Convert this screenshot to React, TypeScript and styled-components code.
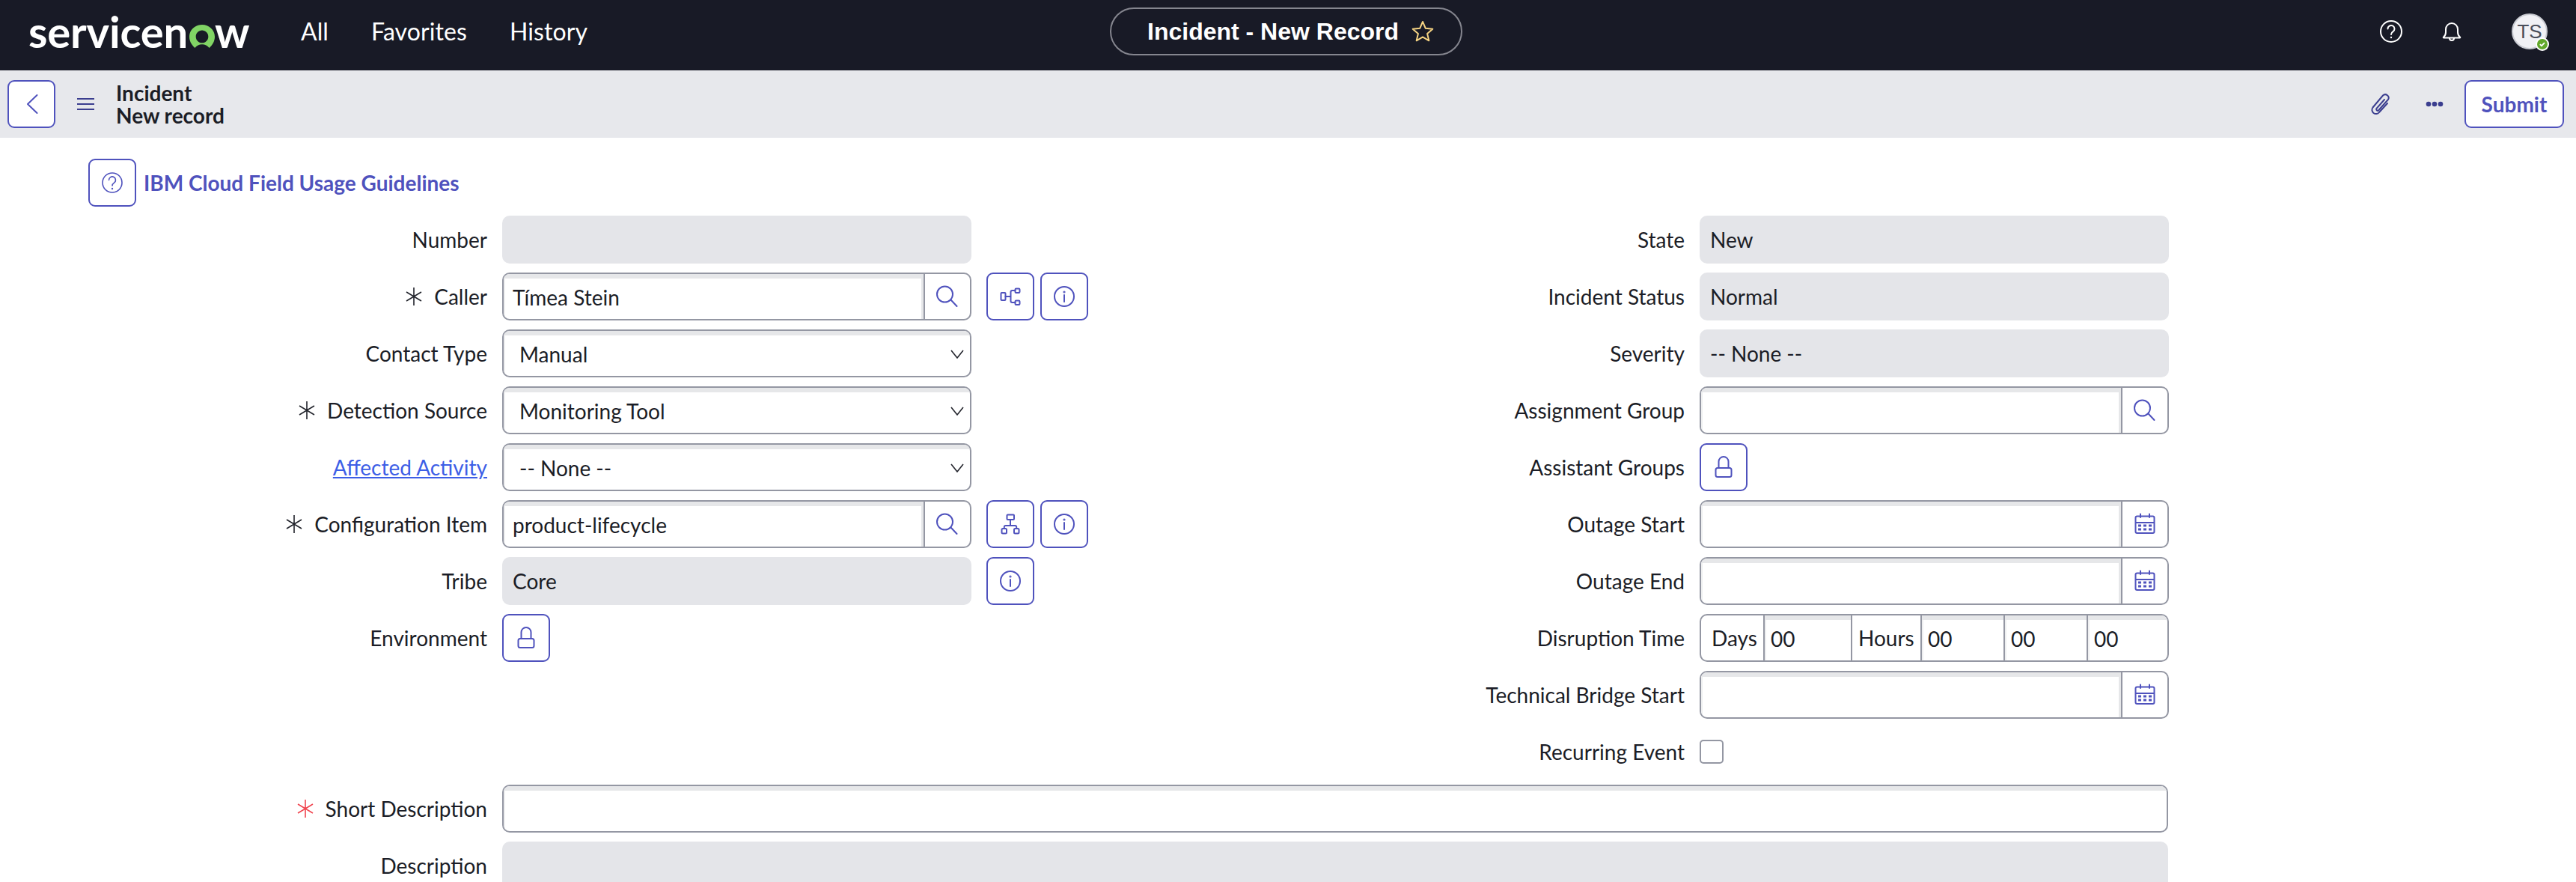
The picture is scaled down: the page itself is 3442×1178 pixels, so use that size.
import React from "react";
import styled, { createGlobalStyle } from "styled-components";

const PRIMARY = "#4f52bd";
const NAVY = "#3b3e8f";
const BORDER = "#9497a3";
const STRIP = "#e6e7e9";
const FONT = `"Lato", "Liberation Sans", Arial, sans-serif`;

const Global = createGlobalStyle`
  html, body { margin: 0; padding: 0; background: #fff; }
  body { font-family: ${FONT}; font-size: 28px; color: #1b1d26; }
  * { box-sizing: border-box; }
`;

const Page = styled.div`
  width: 3442px;
  height: 1178px;
  overflow: hidden;
  background: #fff;
`;

/* ---------- top bar ---------- */
const TopBar = styled.header`
  height: 94px;
  background: #181a26;
  display: grid;
  grid-template-columns: 1483px 471px 1fr;
  align-items: start;
`;
const TopLeft = styled.div`
  display: flex;
  align-items: center;
  height: 84px;
  padding-left: 38px;
`;
const Logo = styled.div`
  display: flex;
  align-items: baseline;
  width: 296px;
  margin-right: 68px;
  font: 700 58px/1 ${FONT};
  color: #fff;
  letter-spacing: -0.2px;
  white-space: nowrap;
`;
const LogoRing = styled.svg`
  width: 34px;
  height: 31px;
  margin: 0 0 -1px 2px;
  flex: none;
`;
const Nav = styled.nav`
  display: flex;
  gap: 57px;
  font: 400 32px/1 ${FONT};
  letter-spacing: 0.1px;
  color: #fff;
`;
const TitlePill = styled.div`
  margin-top: 10px;
  height: 64px;
  border: 2px solid #85868f;
  border-radius: 32px;
  display: flex;
  align-items: center;
  padding-left: 48px;
  gap: 17px;
  font: 700 32px/1 "Liberation Sans", Arial, sans-serif;
  color: #fff;
  white-space: nowrap;
`;
const TopRight = styled.div`
  display: flex;
  align-items: center;
  justify-content: flex-end;
  height: 84px;
  padding-right: 38px;
  gap: 0;
  color: #fff;
`;
const TopIcon = styled.svg<{ $gap: number }>`
  width: 32px;
  height: 32px;
  margin-right: ${(p) => p.$gap}px;
  flex: none;
`;
const Avatar = styled.div`
  position: relative;
  width: 48px;
  height: 48px;
  border-radius: 50%;
  background: #f1f1f5;
  border: 2px solid #c9cbd2;
  color: #4a4e5a;
  font: 400 26px/44px "Liberation Sans", Arial, sans-serif;
  text-align: center;
`;
const AvatarBadge = styled.svg`
  position: absolute;
  right: -4px;
  bottom: -4px;
  width: 18px;
  height: 18px;
`;

/* ---------- sub bar ---------- */
const SubBar = styled.div`
  height: 90px;
  background: #e7e8ec;
  display: flex;
  align-items: center;
  padding: 0 16px 0 10px;
`;
const IconButton = styled.div`
  width: 64px;
  height: 64px;
  flex: none;
  background: #fff;
  border: 2px solid ${PRIMARY};
  border-radius: 9px;
  display: flex;
  align-items: center;
  justify-content: center;
`;
const Burger = styled.div`
  width: 23px;
  margin: 0 29px 0 29px;
  display: flex;
  flex-direction: column;
  gap: 5px;
  flex: none;
`;
const BurgerLine = styled.span`
  display: block;
  height: 2px;
  background: ${NAVY};
`;
const RecordTitle = styled.div`
  font: 700 28px/30px ${FONT};
  color: #1b1d26;
  flex: 1;
`;
const Tool = styled.svg<{ $gap: number }>`
  width: 32px;
  height: 32px;
  margin-right: ${(p) => p.$gap}px;
  flex: none;
`;
const SubmitButton = styled.div`
  width: 133px;
  height: 64px;
  background: #fff;
  border: 2px solid ${PRIMARY};
  border-radius: 9px;
  color: ${PRIMARY};
  font: 700 28px/60px ${FONT};
  text-align: center;
`;

/* ---------- form ---------- */
const Content = styled.main`
  padding-top: 28px;
`;
const GuideRow = styled.div`
  display: flex;
  align-items: center;
  gap: 10px;
  margin: 0 0 12px 118px;
`;
const GuideLink = styled.a`
  color: ${PRIMARY};
  font: 700 28px/1 ${FONT};
`;
const Columns = styled.div`
  display: grid;
  grid-template-columns: 1480px 1fr;
`;
const Stack = styled.div`
  display: flex;
  flex-direction: column;
  gap: 12px;
`;
const FullStack = styled(Stack)`
  margin-top: 12px;
`;
const Row = styled.div`
  display: flex;
  align-items: flex-start;
  gap: 20px;
`;
const Label = styled.div<{ $w: number }>`
  width: ${(p) => p.$w}px;
  height: 64px;
  flex: none;
  display: flex;
  align-items: center;
  justify-content: flex-end;
  gap: 14px;
  font: 400 28px/1 ${FONT};
  color: #1b1d26;
  white-space: nowrap;
`;
const LabelLink = styled.a`
  color: #3d5ee6;
  text-decoration: underline;
`;
const Req = styled.svg<{ $red?: boolean }>`
  width: 26px;
  height: 26px;
  flex: none;
  stroke: ${(p) => (p.$red ? "#f0454f" : "#22242c")};
  stroke-width: 1.6;
  fill: none;
`;
const ReadOnly = styled.div<{ $w?: number; $h?: number }>`
  width: ${(p) => (p.$w ? `${p.$w}px` : "627px")};
  height: ${(p) => p.$h ?? 64}px;
  flex: none;
  background: #e4e5e9;
  border-radius: 10px;
  padding: 0 14px;
  display: flex;
  align-items: center;
  font: 400 28px/1 ${FONT};
`;
const InputFrame = styled.div<{ $w?: number }>`
  width: ${(p) => (p.$w ? `${p.$w}px` : "627px")};
  height: 64px;
  flex: none;
  display: flex;
  border: 2px solid ${BORDER};
  border-radius: 10px;
  background: #fff;
  overflow: hidden;
  font: 400 28px/1 ${FONT};
`;
const InputBody = styled.div<{ $pad?: number; $tail?: boolean }>`
  flex: 1;
  min-width: 0;
  display: flex;
  align-items: center;
  justify-content: space-between;
  padding: 2px 6px 0 ${(p) => p.$pad ?? 12}px;
  box-shadow: inset 0 6px 0 ${STRIP}, inset 2px 0 0 #eeeff0
    ${(p) => (p.$tail ? `, inset -3px 0 0 ${STRIP}` : "")};
`;
const Addon = styled.div`
  width: 62px;
  flex: none;
  border-left: 2px solid ${BORDER};
  display: flex;
  align-items: center;
  justify-content: center;
`;
const Icon = styled.svg`
  width: 32px;
  height: 32px;
  flex: none;
  fill: none;
  stroke: ${PRIMARY};
  stroke-width: 2;
  stroke-linecap: round;
  stroke-linejoin: round;
`;
const Chevron = styled.svg`
  width: 18px;
  height: 12px;
  flex: none;
  margin-right: 2px;
  fill: none;
  stroke: #22242c;
  stroke-width: 1.6;
`;
const Extras = styled.div`
  display: flex;
  gap: 8px;
`;
const DurationFrame = styled(InputFrame)`
  padding: 0;
`;
const DurationUnit = styled.div<{ $w: number; $pad: number }>`
  width: ${(p) => p.$w}px;
  flex: none;
  display: flex;
  align-items: center;
  padding-left: ${(p) => p.$pad}px;
  border-right: 2px solid ${BORDER};
`;
const DurationField = styled.div<{ $w: number; $last?: boolean }>`
  width: ${(p) => p.$w}px;
  flex: ${(p) => (p.$last ? 1 : "none")};
  display: flex;
  align-items: center;
  padding: 2px 0 0 8px;
  box-shadow: inset 0 6px 0 ${STRIP}, inset 2px 0 0 #eeeff0;
  border-right: ${(p) => (p.$last ? 0 : `2px solid ${BORDER}`)};
`;
const CheckSlot = styled.div`
  height: 64px;
  display: flex;
  align-items: center;
`;
const CheckBox = styled.div`
  width: 32px;
  height: 32px;
  border: 2px solid ${BORDER};
  border-radius: 5px;
  background: #fff;
`;

/* ---------- icons ---------- */
const SearchIcon = () => (
  <Icon viewBox="0 0 32 32">
    <circle cx="12.5" cy="13" r="10.5" />
    <path d="M20.5 20.5 28.5 29" />
  </Icon>
);
const InfoIcon = () => (
  <Icon viewBox="0 0 32 32">
    <circle cx="16" cy="16" r="13" />
    <circle cx="16" cy="10" r="0.6" />
    <path d="M16 14v9" />
  </Icon>
);
const LockIcon = () => (
  <Icon viewBox="0 0 32 32">
    <rect x="5.5" y="17" width="21" height="12" rx="2.5" />
    <path d="M9.5 17V8.5a6.5 6.5 0 0 1 13 0V17" />
  </Icon>
);
const CalendarIcon = () => (
  <Icon viewBox="0 0 32 32">
    <rect x="3.5" y="5.5" width="25" height="22.5" rx="2" />
    <path d="M4 14h24M10 2.5V7M22 2.5V7" />
    <g fill={PRIMARY} stroke="none">
      <rect x="7" y="16.5" width="4" height="3" />
      <rect x="14" y="16.5" width="4" height="3" />
      <rect x="21" y="16.5" width="4" height="3" />
      <rect x="7" y="21.5" width="4" height="3" />
      <rect x="14" y="21.5" width="4" height="3" />
      <rect x="21" y="21.5" width="4" height="3" />
    </g>
  </Icon>
);
const FlowIcon = () => (
  <Icon viewBox="0 0 32 32">
    <rect x="3.5" y="11" width="6" height="10" rx="1" />
    <rect x="22.5" y="5.5" width="6" height="5.500" rx="1.2" />
    <rect x="22.5" y="21.500" width="6" height="5.500" rx="1.2" />
    <path d="M9.5 16h7M22.5 8h-4a2 2 0 0 0-2 2v12a2 2 0 0 0 2 2h4" />
  </Icon>
);
const TreeIcon = () => (
  <Icon viewBox="0 0 32 32">
    <rect x="11.5" y="3.5" width="9.5" height="6.5" rx="1" />
    <rect x="4.5" y="22" width="6.5" height="6.5" rx="1.5" />
    <rect x="21" y="22" width="6.5" height="6.5" rx="1.5" />
    <path d="M16 10v8M7.8 22v-2a2 2 0 0 1 2-2h12.4a2 2 0 0 1 2 2v2" />
  </Icon>
);
const QuestionGlyph = ({ color, r = 14, sw = 2 }: { color: string; r?: number; sw?: number }) => (
  <>
    <circle cx="16" cy="16" r={r} fill="none" stroke={color} strokeWidth={sw} />
    <path
      d="M11.5 12.5a4.5 4.5 0 1 1 7 3.7c-1.6 1.1-2.5 2-2.5 3.8"
      fill="none"
      stroke={color}
      strokeWidth={sw}
      strokeLinecap="round"
    />
    <circle cx="16" cy="24" r="1.2" fill={color} stroke="none" />
  </>
);

const Asterisk = ({ red }: { red?: boolean }) => (
  <Req viewBox="0 0 26 26" $red={red}>
    <path d="M13 1v24M3 7l20 12M23 7 3 19" />
  </Req>
);

type LabelProps = { w: number; text: React.ReactNode; req?: "black" | "red" };
const FieldLabel = ({ w, text, req }: LabelProps) => (
  <Label $w={w}>
    {req && <Asterisk red={req === "red"} />}
    <span>{text}</span>
  </Label>
);

const Select = ({ value }: { value: string }) => (
  <InputFrame>
    <InputBody $pad={21}>
      <span>{value}</span>
      <Chevron viewBox="0 0 18 12">
        <path d="M1 1l8 10 8-10" />
      </Chevron>
    </InputBody>
  </InputFrame>
);
const Lookup = ({ value, icon }: { value?: string; icon: React.ReactNode }) => (
  <InputFrame>
    <InputBody $tail>{value}</InputBody>
    <Addon>{icon}</Addon>
  </InputFrame>
);

const L = 651;
const R = 771;

export default function App() {
  return (
    <Page>
      <Global />
      <TopBar>
        <TopLeft>
          <Logo>
            <span>servicen</span>
            <LogoRing viewBox="0 0 34 31">
              <path
                d="M17 0C7.600 0 0 7 0 16c0 6 3.200 11.400 7.400 15 2.400-3 5.600-4.700 9.600-4.700s7.200 1.700 9.600 4.700C30.800 27.400 34 22 34 16 34 7 26.400 0 17 0Zm0 7.600c4.700 0 8.300 3.700 8.300 8.400 0 4.600-3.600 8.300-8.300 8.300S8.700 20.600 8.700 16c0-4.700 3.600-8.400 8.300-8.400Z"
                fill="#81d465"
                fillRule="evenodd"
              />
            </LogoRing>
            <span>w</span>
          </Logo>
          <Nav>
            <span>All</span>
            <span>Favorites</span>
            <span>History</span>
          </Nav>
        </TopLeft>
        <TitlePill>
          <span>Incident - New Record</span>
          <svg width="30" height="30" viewBox="0 0 30 30">
            <path
              d="M15 2l3.800 8.800 9.500.9-7.200 6.300 2.200 9.300L15 22.400l-8.300 4.900 2.200-9.300-7.200-6.300 9.500-.9Z"
              fill="none"
              stroke="#f6d483"
              strokeWidth="2"
              strokeLinejoin="round"
            />
          </svg>
        </TitlePill>
        <TopRight>
          <TopIcon viewBox="0 0 32 32" $gap={49}>
            <QuestionGlyph color="#fff" />
          </TopIcon>
          <TopIcon viewBox="0 0 32 32" $gap={64}>
            <path
              d="M5 23.500c2.200-1.500 3-3.500 3-6.500v-4a8 8 0 0 1 16 0v4c0 3 .8 5 3 6.500.6.500.3 1-.4 1H5.400c-.7 0-1-.5-.4-1Z"
              fill="none"
              stroke="#fff"
              strokeWidth="2"
              strokeLinejoin="round"
            />
            <path d="M13 25a3 3 0 0 0 6 0" fill="none" stroke="#fff" strokeWidth="2" />
          </TopIcon>
          <Avatar>
            TS
            <AvatarBadge viewBox="0 0 18 18">
              <circle cx="9" cy="9" r="9" fill="#fff" />
              <circle cx="9" cy="9" r="7" fill="#62a82b" />
              <path d="M5.800 9.200l2.200 2 4-4" fill="none" stroke="#fff" strokeWidth="1.800" />
            </AvatarBadge>
          </Avatar>
        </TopRight>
      </TopBar>

      <SubBar>
        <IconButton>
          <Icon viewBox="0 0 32 32">
            <path d="M23.500 4 11 16l12.500 12" />
          </Icon>
        </IconButton>
        <Burger>
          <BurgerLine />
          <BurgerLine />
          <BurgerLine />
        </Burger>
        <RecordTitle>
          Incident
          <br />
          New record
        </RecordTitle>
        <Tool viewBox="0 0 32 32" $gap={41}>
          <path
            d="M26 15 15 27a5 5 0 0 1-8.500-6.500L20 4.500a4.500 4.500 0 0 1 7 5.500L14.500 24a1.800 1.800 0 0 1-3-2.200L22 10"
            fill="none"
            stroke={NAVY}
            strokeWidth="2"
            strokeLinecap="round"
          />
        </Tool>
        <Tool viewBox="0 0 32 32" $gap={24}>
          <circle cx="8" cy="16" r="3.300" fill={NAVY} />
          <circle cx="16" cy="16" r="3.300" fill={NAVY} />
          <circle cx="24" cy="16" r="3.300" fill={NAVY} />
        </Tool>
        <SubmitButton>Submit</SubmitButton>
      </SubBar>

      <Content>
        <GuideRow>
          <IconButton>
            <Icon viewBox="0 0 32 32">
              <QuestionGlyph color={PRIMARY} r={13} sw={1.6} />
            </Icon>
          </IconButton>
          <GuideLink>IBM Cloud Field Usage Guidelines</GuideLink>
        </GuideRow>

        <Columns>
          <Stack>
            <Row>
              <FieldLabel w={L} text="Number" />
              <ReadOnly />
            </Row>
            <Row>
              <FieldLabel w={L} text="Caller" req="black" />
              <Lookup value="Tímea Stein" icon={<SearchIcon />} />
              <Extras>
                <IconButton><FlowIcon /></IconButton>
                <IconButton><InfoIcon /></IconButton>
              </Extras>
            </Row>
            <Row>
              <FieldLabel w={L} text="Contact Type" />
              <Select value="Manual" />
            </Row>
            <Row>
              <FieldLabel w={L} text="Detection Source" req="black" />
              <Select value="Monitoring Tool" />
            </Row>
            <Row>
              <FieldLabel w={L} text={<LabelLink>Affected Activity</LabelLink>} />
              <Select value="-- None --" />
            </Row>
            <Row>
              <FieldLabel w={L} text="Configuration Item" req="black" />
              <Lookup value="product-lifecycle" icon={<SearchIcon />} />
              <Extras>
                <IconButton><TreeIcon /></IconButton>
                <IconButton><InfoIcon /></IconButton>
              </Extras>
            </Row>
            <Row>
              <FieldLabel w={L} text="Tribe" />
              <ReadOnly>Core</ReadOnly>
              <IconButton><InfoIcon /></IconButton>
            </Row>
            <Row>
              <FieldLabel w={L} text="Environment" />
              <IconButton><LockIcon /></IconButton>
            </Row>
          </Stack>

          <Stack>
            <Row>
              <FieldLabel w={R} text="State" />
              <ReadOnly>New</ReadOnly>
            </Row>
            <Row>
              <FieldLabel w={R} text="Incident Status" />
              <ReadOnly>Normal</ReadOnly>
            </Row>
            <Row>
              <FieldLabel w={R} text="Severity" />
              <ReadOnly>-- None --</ReadOnly>
            </Row>
            <Row>
              <FieldLabel w={R} text="Assignment Group" />
              <Lookup icon={<SearchIcon />} />
            </Row>
            <Row>
              <FieldLabel w={R} text="Assistant Groups" />
              <IconButton><LockIcon /></IconButton>
            </Row>
            <Row>
              <FieldLabel w={R} text="Outage Start" />
              <Lookup icon={<CalendarIcon />} />
            </Row>
            <Row>
              <FieldLabel w={R} text="Outage End" />
              <Lookup icon={<CalendarIcon />} />
            </Row>
            <Row>
              <FieldLabel w={R} text="Disruption Time" />
              <DurationFrame>
                <DurationUnit $w={85} $pad={14}>Days</DurationUnit>
                <DurationField $w={117}>00</DurationField>
                <DurationUnit $w={93} $pad={8}>Hours</DurationUnit>
                <DurationField $w={111}>00</DurationField>
                <DurationField $w={111}>00</DurationField>
                <DurationField $w={100} $last>00</DurationField>
              </DurationFrame>
            </Row>
            <Row>
              <FieldLabel w={R} text="Technical Bridge Start" />
              <Lookup icon={<CalendarIcon />} />
            </Row>
            <Row>
              <FieldLabel w={R} text="Recurring Event" />
              <CheckSlot><CheckBox /></CheckSlot>
            </Row>
          </Stack>
        </Columns>

        <FullStack>
          <Row>
            <FieldLabel w={L} text="Short Description" req="red" />
            <InputFrame $w={2226}>
              <InputBody />
            </InputFrame>
          </Row>
          <Row>
            <FieldLabel w={L} text="Description" />
            <ReadOnly $w={2226} $h={160} />
          </Row>
        </FullStack>
      </Content>
    </Page>
  );
}
